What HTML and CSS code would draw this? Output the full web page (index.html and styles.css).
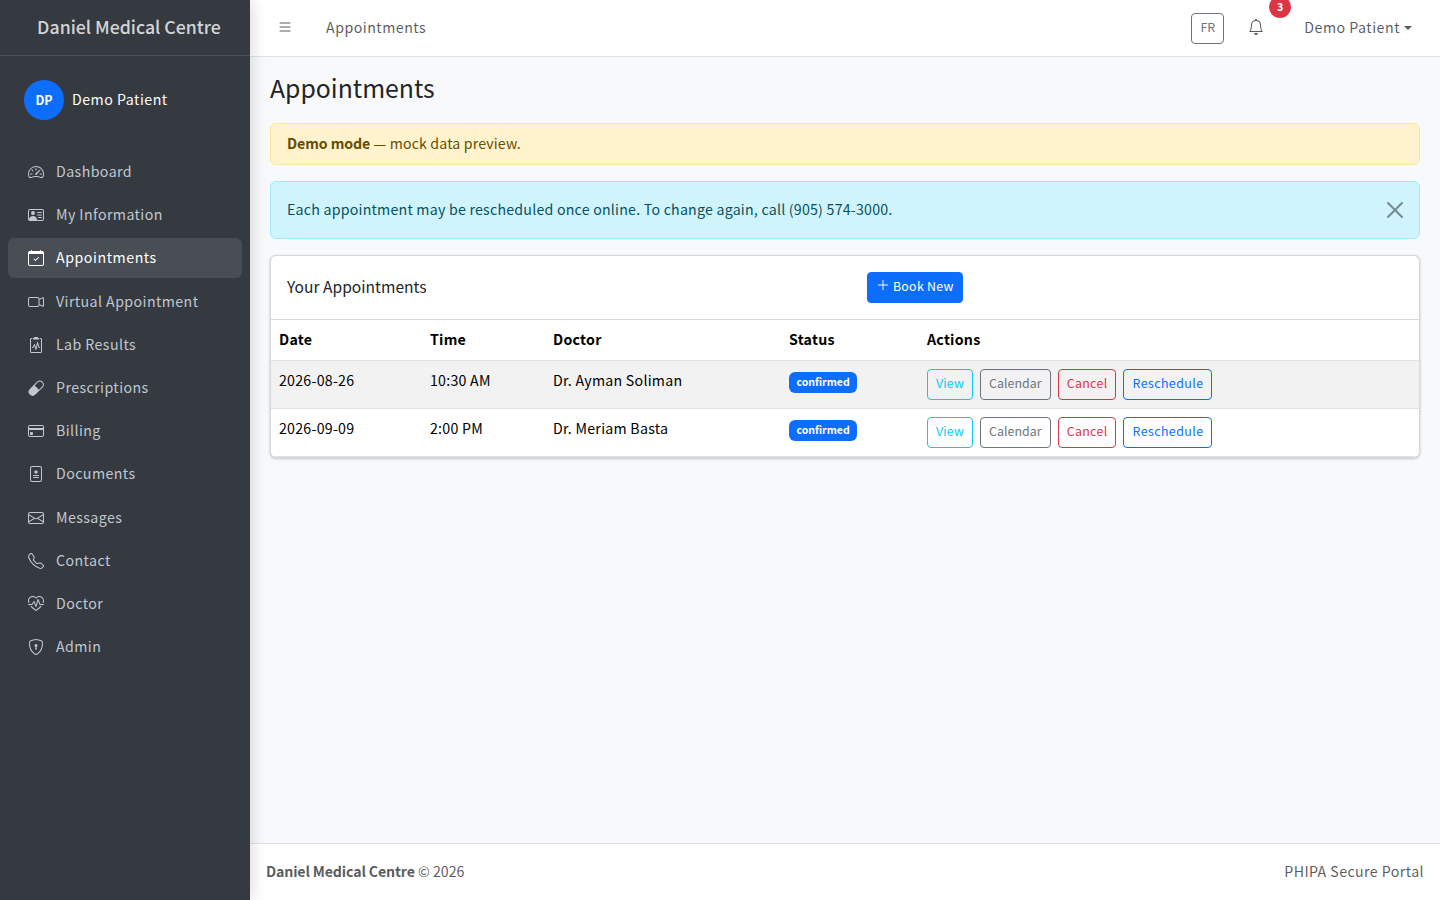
FILE: index.html
```html
<!DOCTYPE html>
<html lang="en">
<head>
    <meta charset="UTF-8">
    <meta name="viewport" content="width=device-width, initial-scale=1.0">
    <title>Appointments</title>
    <link rel="stylesheet" href="styles.css">
</head>
<body>
    <aside class="sidebar">
        <div class="brand">Daniel Medical Centre</div>
        <div class="user-panel">
            <div class="avatar">DP</div>
            <span class="user-name">Demo Patient</span>
        </div>
        <nav class="menu">
            <a class="menu-item">
                <svg class="bi" viewBox="0 0 16 16"><path d="M8 4a.5.5 0 0 1 .5.5V6a.5.5 0 0 1-1 0V4.5A.5.5 0 0 1 8 4zM3.732 5.732a.5.5 0 0 1 .707 0l.915.914a.5.5 0 1 1-.708.708l-.914-.915a.5.5 0 0 1 0-.707zM2 10a.5.5 0 0 1 .5-.5h1.586a.5.5 0 0 1 0 1H2.5A.5.5 0 0 1 2 10zm9.5 0a.5.5 0 0 1 .5-.5h1.5a.5.5 0 0 1 0 1H12a.5.5 0 0 1-.5-.5zm.754-4.246a.389.389 0 0 0-.527-.02L7.547 9.31a.91.91 0 1 0 1.302 1.258l3.434-4.297a.389.389 0 0 0-.029-.518z"/><path fill-rule="evenodd" d="M0 10a8 8 0 1 1 15.547 2.661c-.442 1.253-1.845 1.602-2.932 1.25C11.309 13.488 9.475 13 8 13c-1.474 0-3.31.488-4.615.911-1.087.352-2.49.003-2.932-1.25A7.988 7.988 0 0 1 0 10zm8-7a7 7 0 0 0-6.603 9.329c.203.575.923.876 1.68.63C4.397 12.533 6.358 12 8 12s3.604.532 4.923.96c.757.245 1.477-.056 1.68-.631A7 7 0 0 0 8 3z"/></svg>
                Dashboard
            </a>
            <a class="menu-item">
                <svg class="bi" viewBox="0 0 16 16"><path d="M5 8a2 2 0 1 0 0-4 2 2 0 0 0 0 4Zm4-2.5a.5.5 0 0 1 .5-.5h4a.5.5 0 0 1 0 1h-4a.5.5 0 0 1-.5-.5ZM9 8a.5.5 0 0 1 .5-.5h4a.5.5 0 0 1 0 1h-4A.5.5 0 0 1 9 8Zm1 2.5a.5.5 0 0 1 .5-.5h3a.5.5 0 0 1 0 1h-3a.5.5 0 0 1-.5-.5Z"/><path d="M2 2a2 2 0 0 0-2 2v8a2 2 0 0 0 2 2h12a2 2 0 0 0 2-2V4a2 2 0 0 0-2-2H2ZM1 4a1 1 0 0 1 1-1h12a1 1 0 0 1 1 1v8a1 1 0 0 1-1 1H8.96c.026-.163.04-.33.04-.5C9 10.567 7.21 9 5 9c-2.086 0-3.8 1.398-3.984 3.181A1.006 1.006 0 0 1 1 12V4Z"/></svg>
                My Information
            </a>
            <a class="menu-item active">
                <svg class="bi" viewBox="0 0 16 16"><path d="M10.854 7.146a.5.5 0 0 1 0 .708l-3 3a.5.5 0 0 1-.708 0l-1.5-1.5a.5.5 0 1 1 .708-.708L7.5 9.793l2.646-2.647a.5.5 0 0 1 .708 0z"/><path d="M3.5 0a.5.5 0 0 1 .5.5V1h8V.5a.5.5 0 0 1 1 0V1h1a2 2 0 0 1 2 2v11a2 2 0 0 1-2 2H2a2 2 0 0 1-2-2V3a2 2 0 0 1 2-2h1V.5a.5.5 0 0 1 .5-.5zM1 4v10a1 1 0 0 0 1 1h12a1 1 0 0 0 1-1V4H1z"/></svg>
                Appointments
            </a>
            <a class="menu-item">
                <svg class="bi" viewBox="0 0 16 16"><path fill-rule="evenodd" d="M0 5a2 2 0 0 1 2-2h7.5a2 2 0 0 1 1.983 1.738l3.11-1.382A1 1 0 0 1 16 4.269v7.462a1 1 0 0 1-1.406.913l-3.111-1.382A2 2 0 0 1 9.5 13H2a2 2 0 0 1-2-2V5zm11.5 5.175 3.5 1.556V4.269l-3.5 1.556v4.35zM2 4a1 1 0 0 0-1 1v6a1 1 0 0 0 1 1h7.5a1 1 0 0 0 1-1V5a1 1 0 0 0-1-1H2z"/></svg>
                Virtual Appointment
            </a>
            <a class="menu-item">
                <svg class="bi" viewBox="0 0 16 16"><path d="M9.5 0a.5.5 0 0 1 .5.5.5.5 0 0 0 .5.5.5.5 0 0 1 .5.5V2a.5.5 0 0 1-.5.5h-5A.5.5 0 0 1 5 2v-.5a.5.5 0 0 1 .5-.5.5.5 0 0 0 .5-.5.5.5 0 0 1 .5-.5h3Z"/><path d="M3 2.5a.5.5 0 0 1 .5-.5H4a.5.5 0 0 0 0-1h-.5A1.5 1.5 0 0 0 2 2.5v12A1.5 1.5 0 0 0 3.5 16h9a1.5 1.5 0 0 0 1.5-1.5v-12A1.5 1.5 0 0 0 12.5 1H12a.5.5 0 0 0 0 1h.5a.5.5 0 0 1 .5.5v12a.5.5 0 0 1-.5.5h-9a.5.5 0 0 1-.5-.5v-12Z"/><path d="M9.979 5.356a.5.5 0 0 0-.968.04L7.92 10.49l-.94-3.135a.5.5 0 0 0-.926-.08L4.69 10H4.5a.5.5 0 0 0 0 1H5a.5.5 0 0 0 .447-.276l.936-1.873 1.138 3.793a.5.5 0 0 0 .968-.04L9.58 7.51l.94 3.135A.5.5 0 0 0 11 11h.5a.5.5 0 0 0 0-1h-.128L9.979 5.356Z"/></svg>
                Lab Results
            </a>
            <a class="menu-item">
                <svg class="bi" viewBox="0 0 16 16"><path d="M1.828 8.9 8.9 1.827a4 4 0 1 1 5.657 5.657l-7.07 7.071A4 4 0 1 1 1.827 8.9Zm9.128.771 2.893-2.893a3 3 0 1 0-4.243-4.242L6.713 5.429l4.243 4.242Z"/></svg>
                Prescriptions
            </a>
            <a class="menu-item">
                <svg class="bi" viewBox="0 0 16 16"><path d="M0 4a2 2 0 0 1 2-2h12a2 2 0 0 1 2 2v8a2 2 0 0 1-2 2H2a2 2 0 0 1-2-2V4zm2-1a1 1 0 0 0-1 1v1h14V4a1 1 0 0 0-1-1H2zm13 4H1v5a1 1 0 0 0 1 1h12a1 1 0 0 0 1-1V7z"/><path d="M2 10a1 1 0 0 1 1-1h1a1 1 0 0 1 1 1v1a1 1 0 0 1-1 1H3a1 1 0 0 1-1-1v-1z"/></svg>
                Billing
            </a>
            <a class="menu-item">
                <svg class="bi" viewBox="0 0 16 16"><path d="M8.5 4.5a.5.5 0 0 0-1 0v.634l-.549-.317a.5.5 0 1 0-.5.866L7 6l-.549.317a.5.5 0 1 0 .5.866l.549-.317V7.5a.5.5 0 1 0 1 0v-.634l.549.317a.5.5 0 1 0 .5-.866L9 6l.549-.317a.5.5 0 1 0-.5-.866l-.549.317V4.5zM5.5 9a.5.5 0 0 0 0 1h5a.5.5 0 0 0 0-1h-5zm0 2a.5.5 0 0 0 0 1h5a.5.5 0 0 0 0-1h-5z"/><path d="M2 2a2 2 0 0 1 2-2h8a2 2 0 0 1 2 2v12a2 2 0 0 1-2 2H4a2 2 0 0 1-2-2V2zm10-1H4a1 1 0 0 0-1 1v12a1 1 0 0 0 1 1h8a1 1 0 0 0 1-1V2a1 1 0 0 0-1-1z"/></svg>
                Documents
            </a>
            <a class="menu-item">
                <svg class="bi" viewBox="0 0 16 16"><path d="M0 4a2 2 0 0 1 2-2h12a2 2 0 0 1 2 2v8a2 2 0 0 1-2 2H2a2 2 0 0 1-2-2V4Zm2-1a1 1 0 0 0-1 1v.217l7 4.2 7-4.2V4a1 1 0 0 0-1-1H2Zm13 2.383-4.708 2.825L15 11.105V5.383Zm-.034 6.876-5.64-3.471L8 9.583l-1.326-.795-5.64 3.47A1 1 0 0 0 2 13h12a1 1 0 0 0 .966-.741ZM1 11.105l4.708-2.897L1 5.383v5.722Z"/></svg>
                Messages
            </a>
            <a class="menu-item">
                <svg class="bi" viewBox="0 0 16 16"><path d="M3.654 1.328a.678.678 0 0 0-1.015-.063L1.605 2.3c-.483.484-.661 1.169-.45 1.77a17.568 17.568 0 0 0 4.168 6.608 17.569 17.569 0 0 0 6.608 4.168c.601.211 1.286.033 1.77-.45l1.034-1.034a.678.678 0 0 0-.063-1.015l-2.307-1.794a.678.678 0 0 0-.58-.122l-2.19.547a1.745 1.745 0 0 1-1.657-.459L5.482 8.062a1.745 1.745 0 0 1-.46-1.657l.548-2.19a.678.678 0 0 0-.122-.58L3.654 1.328zM1.884.511a1.745 1.745 0 0 1 2.612.163L6.29 2.98c.329.423.445.974.315 1.494l-.547 2.19a.678.678 0 0 0 .178.643l2.457 2.457a.678.678 0 0 0 .644.178l2.189-.547a1.745 1.745 0 0 1 1.494.315l2.306 1.794c.829.645.905 1.87.163 2.611l-1.034 1.034c-.74.74-1.846 1.065-2.877.702a18.634 18.634 0 0 1-7.01-4.42 18.634 18.634 0 0 1-4.42-7.009c-.362-1.03-.037-2.137.703-2.877L1.885.511z"/></svg>
                Contact
            </a>
            <a class="menu-item">
                <svg class="bi" viewBox="0 0 16 16"><path d="m8 2.748-.717-.737C5.6.281 2.514.878 1.4 3.053.918 3.995.78 5.323 1.508 7H.43c-2.128-5.697 4.165-8.83 7.394-5.857.06.055.119.112.176.171a3.12 3.12 0 0 1 .176-.17c3.23-2.974 9.522.159 7.394 5.856h-1.078c.728-1.677.59-3.005.108-3.947C13.486.878 10.4.28 8.717 2.01L8 2.748ZM2.212 10h1.315C4.593 11.183 6.05 12.458 8 13.795c1.949-1.337 3.407-2.612 4.473-3.795h1.315c-1.175 1.527-2.921 3.244-5.788 5.109-2.867-1.865-4.613-3.582-5.788-5.11Z"/><path d="M10.464 3.314a.5.5 0 0 0-.945.049L7.921 8.956 6.464 5.314a.5.5 0 0 0-.88-.091L3.732 8H.5a.5.5 0 0 0 0 1H4a.5.5 0 0 0 .416-.223l1.473-2.209 1.647 4.118a.5.5 0 0 0 .945-.049l1.598-5.593 1.457 3.642A.5.5 0 0 0 12 9h3.5a.5.5 0 0 0 0-1h-3.162l-1.874-4.686Z"/></svg>
                Doctor
            </a>
            <a class="menu-item">
                <svg class="bi" viewBox="0 0 16 16"><path d="M5.338 1.59a61.44 61.44 0 0 0-2.837.856.481.481 0 0 0-.328.39c-.554 4.157.726 7.19 2.253 9.188a10.725 10.725 0 0 0 2.287 2.233c.346.244.652.42.893.533.12.057.218.095.293.118a.55.55 0 0 0 .101.025.615.615 0 0 0 .1-.025c.076-.023.174-.061.294-.118.24-.113.547-.29.893-.533a10.726 10.726 0 0 0 2.287-2.233c1.527-1.997 2.807-5.031 2.253-9.188a.48.48 0 0 0-.328-.39c-.651-.213-1.75-.56-2.837-.855C9.552 1.29 8.531 1.067 8 1.067c-.53 0-1.552.223-2.662.524zM5.072.56C6.157.265 7.31 0 8 0s1.843.265 2.928.56c1.11.3 2.229.655 2.887.87a1.54 1.54 0 0 1 1.044 1.262c.596 4.477-.787 7.795-2.465 9.99a11.775 11.775 0 0 1-2.517 2.453 7.159 7.159 0 0 1-1.048.625c-.28.132-.581.24-.829.24s-.548-.108-.829-.24a7.158 7.158 0 0 1-1.048-.625 11.777 11.777 0 0 1-2.517-2.453C1.928 10.487.545 7.169 1.141 2.692A1.54 1.54 0 0 1 2.185 1.43 62.456 62.456 0 0 1 5.072.56z"/><path d="M9.5 6.5a1.5 1.5 0 0 1-1 1.415l.385 1.99a.5.5 0 0 1-.491.595h-.788a.5.5 0 0 1-.49-.595l.384-1.99a1.5 1.5 0 1 1 2-1.415z"/></svg>
                Admin
            </a>
        </nav>
    </aside>

    <div class="main">
        <header class="topbar">
            <svg class="bi toggle" viewBox="0 0 16 16"><path fill-rule="evenodd" d="M2.5 12a.5.5 0 0 1 .5-.5h10a.5.5 0 0 1 0 1H3a.5.5 0 0 1-.5-.5zm0-4a.5.5 0 0 1 .5-.5h10a.5.5 0 0 1 0 1H3a.5.5 0 0 1-.5-.5zm0-4a.5.5 0 0 1 .5-.5h10a.5.5 0 0 1 0 1H3a.5.5 0 0 1-.5-.5z"/></svg>
            <span class="top-title">Appointments</span>
            <div class="top-right">
                <button class="btn btn-secondary btn-lang">FR</button>
                <div class="bell">
                    <svg class="bi" viewBox="0 0 16 16"><path d="M8 16a2 2 0 0 0 2-2H6a2 2 0 0 0 2 2zM8 1.918l-.797.161A4.002 4.002 0 0 0 4 6c0 .628-.134 2.197-.459 3.742-.16.767-.376 1.566-.663 2.258h10.244c-.287-.692-.502-1.49-.663-2.258C12.134 8.197 12 6.628 12 6a4.002 4.002 0 0 0-3.203-3.92L8 1.917zM14.22 12c.223.447.481.801.78 1H1c.299-.199.557-.553.78-1C2.68 10.2 3 6.88 3 6c0-2.42 1.72-4.44 4.005-4.901a1 1 0 1 1 1.99 0A5.002 5.002 0 0 1 13 6c0 .88.32 4.2 1.22 6z"/></svg>
                    <span class="bell-count">3</span>
                </div>
                <span class="top-user">Demo Patient</span>
            </div>
        </header>

        <main class="content">
            <h1 class="page-title">Appointments</h1>
            <div class="alert alert-warning"><strong>Demo mode</strong> — mock data preview.</div>
            <div class="alert alert-info">
                <span>Each appointment may be rescheduled once online. To change again, call (905) 574-3000.</span>
                <svg class="close" viewBox="0 0 16 16"><path d="M.293.293a1 1 0 0 1 1.414 0L8 6.586 14.293.293a1 1 0 1 1 1.414 1.414L9.414 8l6.293 6.293a1 1 0 0 1-1.414 1.414L8 9.414l-6.293 6.293a1 1 0 0 1-1.414-1.414L6.586 8 .293 1.707a1 1 0 0 1 0-1.414z"/></svg>
            </div>

            <section class="card">
                <div class="card-header">
                    <h2 class="card-title">Your Appointments</h2>
                    <button class="btn btn-primary">
                        <svg class="bi plus" viewBox="0 0 16 16"><path fill-rule="evenodd" d="M8 2a.5.5 0 0 1 .5.5v5h5a.5.5 0 0 1 0 1h-5v5a.5.5 0 0 1-1 0v-5h-5a.5.5 0 0 1 0-1h5v-5A.5.5 0 0 1 8 2Z"/></svg>
                        Book New
                    </button>
                </div>
                <table class="table">
                    <thead>
                        <tr>
                            <th class="col-date">Date</th>
                            <th class="col-time">Time</th>
                            <th class="col-doctor">Doctor</th>
                            <th class="col-status">Status</th>
                            <th>Actions</th>
                        </tr>
                    </thead>
                    <tbody>
                        <tr class="striped">
                            <td>2026-08-26</td>
                            <td>10:30 AM</td>
                            <td>Dr. Ayman Soliman</td>
                            <td><span class="badge">confirmed</span></td>
                            <td>
                                <div class="actions">
                                    <button class="btn btn-info">View</button>
                                    <button class="btn btn-secondary">Calendar</button>
                                    <button class="btn btn-danger">Cancel</button>
                                    <button class="btn btn-outline-primary">Reschedule</button>
                                </div>
                            </td>
                        </tr>
                        <tr>
                            <td>2026-09-09</td>
                            <td>2:00 PM</td>
                            <td>Dr. Meriam Basta</td>
                            <td><span class="badge">confirmed</span></td>
                            <td>
                                <div class="actions">
                                    <button class="btn btn-info">View</button>
                                    <button class="btn btn-secondary">Calendar</button>
                                    <button class="btn btn-danger">Cancel</button>
                                    <button class="btn btn-outline-primary">Reschedule</button>
                                </div>
                            </td>
                        </tr>
                    </tbody>
                </table>
            </section>
        </main>

        <footer class="footer">
            <span><strong>Daniel Medical Centre</strong> © 2026</span>
            <span class="footer-note">PHIPA Secure Portal</span>
        </footer>
    </div>
</body>
</html>
```

FILE: styles.css
```css
* {
    margin: 0;
    padding: 0;
    box-sizing: border-box;
}

body {
    display: flex;
    height: 100vh;
    overflow: hidden;
    font-family: "Noto Sans CJK SC", sans-serif;
    font-size: 14.2px;
    line-height: 24px;
    color: #212529;
    background-color: #f8f9fa;
}

.bi {
    width: 16px;
    height: 16px;
    flex-shrink: 0;
    fill: currentColor;
}

/* sidebar */
.sidebar {
    width: 250px;
    flex-shrink: 0;
    background-color: #343a40;
    color: #c2c7d0;
    box-shadow: 0 0 16px rgba(0, 0, 0, 0.18);
    position: relative;
    z-index: 2;
}

.brand {
    height: 56px;
    padding: 0 0 4px 8px;
    display: flex;
    justify-content: center;
    align-items: center;
    font-size: 17.7px;
    font-weight: 500;
    color: rgba(255, 255, 255, 0.8);
    border-bottom: 1px solid #4b545c;
}

.user-panel {
    display: flex;
    align-items: center;
    gap: 8px;
    padding: 24px 24px 32px;
}

.avatar {
    width: 40px;
    height: 40px;
    padding-bottom: 1px;
    border-radius: 50%;
    background-color: #0d6efd;
    color: white;
    display: flex;
    justify-content: center;
    align-items: center;
    font-size: 12.4px;
    font-weight: 700;
}

.user-name {
    margin-bottom: 2px;
    color: white;
    letter-spacing: 0.5px;
}

.menu {
    padding: 0 8px;
    letter-spacing: 0.42px;
}

.menu-item {
    height: 40px;
    margin-bottom: 3.2px;
    padding-left: 20px;
    display: flex;
    align-items: flex-start;
    gap: 12px;
    line-height: 38px;
    border-radius: 6px;
}

.menu-item .bi {
    align-self: center;
}

.menu-item.active {
    background-color: rgba(255, 255, 255, 0.1);
    color: white;
    letter-spacing: 0.55px;
}

/* top bar */
.main {
    flex: 1;
    min-width: 0;
    display: flex;
    flex-direction: column;
}

.topbar {
    height: 57px;
    flex-shrink: 0;
    padding: 0 28px 0 27px;
    display: flex;
    align-items: center;
    background-color: white;
    border-bottom: 1px solid #dee2e6;
    color: rgba(33, 37, 41, 0.75);
    letter-spacing: 0.5px;
}

.toggle {
    margin: 0 33px 2px 0;
}

.top-title,
.top-user {
    margin-bottom: 2px;
}

.top-right {
    margin-left: auto;
    display: flex;
    align-items: center;
}

.bell {
    margin: 0 40px 2px 24px;
    display: flex;
    position: relative;
}

.bell-count {
    position: absolute;
    top: -23px;
    left: 21px;
    width: 22px;
    height: 22px;
    border-radius: 50%;
    background-color: #dc3545;
    color: white;
    font-size: 10.6px;
    font-weight: 700;
    line-height: 22px;
    text-align: center;
}

.top-user::after {
    content: "";
    display: inline-block;
    margin-left: 4px;
    vertical-align: 3px;
    border-top: 4.8px solid;
    border-left: 4.8px solid transparent;
    border-right: 4.8px solid transparent;
}

/* content */
.content {
    flex: 1;
    padding: 16px 20px;
}

.page-title {
    font-size: 24.8px;
    font-weight: 400;
    line-height: 28px;
    margin-bottom: 22px;
}

.alert {
    padding: 7px 16px 9px;
    margin-bottom: 16px;
    border: 1px solid;
    border-radius: 6px;
}

.alert-warning {
    background-color: #fff3cd;
    border-color: #ffe69c;
    color: #664d03;
    letter-spacing: 0.14px;
}

.alert-warning strong {
    letter-spacing: -0.1px;
}

.alert-info {
    padding: 15px 16px 17px;
    display: flex;
    justify-content: space-between;
    align-items: center;
    background-color: #cff4fc;
    border-color: #9eeaf9;
    color: #055160;
    letter-spacing: 0.22px;
}

.close {
    width: 16px;
    height: 16px;
    margin-top: 2px;
    fill: #212529;
    opacity: 0.5;
}

.card {
    background-color: white;
    border: 1px solid #d9d9d9;
    border-radius: 6px;
    box-shadow: 0 0 1px rgba(0, 0, 0, 0.125), 0 1px 3px rgba(0, 0, 0, 0.2);
    overflow: hidden;
}

.card-header {
    height: 64px;
    padding: 16px;
    display: flex;
    justify-content: space-between;
    align-items: center;
    border-bottom: 1px solid #d9d9d9;
}

/* empty third item, the way a clearfix sits in a flex header */
.card-header::after {
    content: "";
}

.card-title {
    margin-bottom: 4px;
    font-size: 15.6px;
    font-weight: 400;
}

.btn {
    height: 31px;
    padding: 0 8px 2px;
    font-family: inherit;
    font-size: 12.4px;
    line-height: 1.5;
    letter-spacing: 0.15px;
    background-color: transparent;
    border: 1px solid;
    border-radius: 4px;
}

.btn-primary {
    background-color: #0d6efd;
    border-color: #0d6efd;
    color: white;
    letter-spacing: 0.28px;
}

.plus {
    width: 14px;
    height: 14px;
    vertical-align: -1px;
}

.btn-secondary {
    color: #6c757d;
    letter-spacing: 0.05px;
}

.btn-info {
    color: #0dcaf0;
}

.btn-danger {
    color: #dc3545;
    letter-spacing: 0.32px;
}

.btn-outline-primary {
    color: #0d6efd;
    letter-spacing: 0.43px;
}

.table {
    width: 100%;
    border-collapse: collapse;
    table-layout: fixed;
    color: black;
    letter-spacing: 0.25px;
}

.table th {
    padding: 7px 8px 9px;
    text-align: left;
    font-weight: 700;
    border-bottom: 1px solid #dee2e6;
}

.table td {
    padding: 7px 8px 9px;
    vertical-align: top;
    border-bottom: 1px solid #dee2e6;
}

.col-date {
    width: 151px;
}

.col-time {
    width: 123px;
}

.col-doctor {
    width: 236px;
}

.col-status {
    width: 138px;
}

.striped {
    background-color: #f2f2f2;
}

.badge {
    display: inline-block;
    padding: 4.5px 7.5px;
    font-size: 10.5px;
    font-weight: 700;
    line-height: 12px;
    letter-spacing: 0;
    color: white;
    background-color: #0d6efd;
    border-radius: 6px;
}

.actions {
    margin: 1px 0 -1px;
    display: flex;
    gap: 7px;
}

.footer {
    height: 57px;
    flex-shrink: 0;
    padding: 0 16px 2px;
    display: flex;
    justify-content: space-between;
    align-items: center;
    background-color: white;
    border-top: 1px solid #dee2e6;
    color: rgba(33, 37, 41, 0.75);
}

.footer strong {
    letter-spacing: -0.15px;
}

.footer-note {
    letter-spacing: 0.42px;
}
```
